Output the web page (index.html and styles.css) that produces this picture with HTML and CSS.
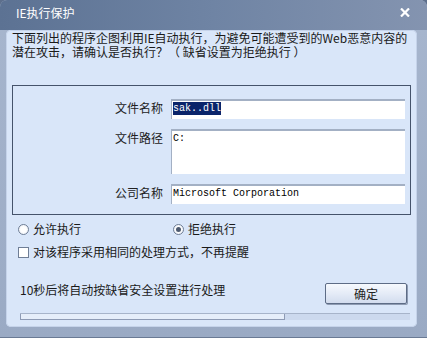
FILE: index.html
```html
<!DOCTYPE html>
<html>
<head>
<meta charset="utf-8">
<link rel="stylesheet" href="styles.css">
</head>
<body>
<div class="window">
  <div class="titlebar">
    <span class="title">IE执行保护</span>
    <svg class="close" width="10" height="9" viewBox="0 0 10 9"><path d="M1 0.5 L9 8.5 M9 0.5 L1 8.5" stroke="#fff" stroke-width="2.2" fill="none"/></svg>
  </div>
  <div class="client">
    <p class="intro">下面列出的程序企图利用IE自动执行，为避免可能遭受到的Web恶意内容的<br>潜在攻击，请确认是否执行？（ 缺省设置为拒绝执行 ）</p>
    <div class="group">
      <div class="field">
        <span class="label">文件名称</span>
        <div class="box"><span class="sel">sak..dll</span></div>
      </div>
      <div class="field">
        <span class="label">文件路径</span>
        <div class="box tall">C:</div>
      </div>
      <div class="field">
        <span class="label">公司名称</span>
        <div class="box">Microsoft Corporation</div>
      </div>
    </div>
    <div class="radios">
      <label class="opt allow"><span class="radio"></span>允许执行</label>
      <label class="opt"><span class="radio on"></span>拒绝执行</label>
    </div>
    <label class="check"><span class="checkbox"></span>对该程序采用相同的处理方式，不再提醒</label>
    <div class="footer">
      <span class="countdown">10秒后将自动按缺省安全设置进行处理</span>
      <button class="ok">确定</button>
    </div>
    <div class="progress"><div class="fill" style="width:68%"></div></div>
  </div>
</div>
</body>
</html>
```
FILE: styles.css
```css
html, body { margin: 0; padding: 0; background: #5d6f8c; }
body { font-family: "Noto Sans CJK SC", "Noto Sans", sans-serif; font-size: 12px; color: #1a1a1a; }
.window {
  width: 427px; height: 338px; box-sizing: border-box;
  background: linear-gradient(#a7b6ce, #9aaac4);
  border-radius: 7px 7px 0 0;
  display: flex; flex-direction: column;
  padding: 0 10px 10px 6px;
  border-bottom: 1px solid #6a7a94;
}
.titlebar {
  height: 30px; margin: 0 -10px 0 -6px; padding: 0 16px;
  background: linear-gradient(90deg, #5c7293 0%, #6f84a4 50%, #8494b0 100%);
  border-radius: 7px 7px 0 0;
  display: flex; align-items: center; justify-content: space-between;
  box-sizing: border-box; padding-bottom: 5px;
}
.title { color: #fff; font-size: 12px; line-height: 14px; }
.close { margin-right: 1px; }
.client {
  flex: 1; background: #d9e6f9; border-radius: 5px;
  display: flex; flex-direction: column;
  padding: 1px 6px 0 6px;
  box-shadow: inset 0 0 0 1px #c5d3ea;
}
.intro { margin: 0; line-height: 14px; letter-spacing: 0; white-space: nowrap; }
.group {
  margin-top: 26px; height: 130px; box-sizing: border-box;
  border: 1px solid #45536b; padding: 13px 5px 0 0;
  display: flex; flex-direction: column; gap: 10px;
}
.field { display: flex; align-items: flex-start; }
.label { width: 150px; text-align: right; padding-right: 8px; line-height: 16px; padding-top: 1px; color: #222; }
.box {
  flex: 1; height: 20px; box-sizing: border-box; background: #fff;
  border-top: 2px solid #a3b0c4; border-left: 1px solid #a3b0c4;
  font-family: "Liberation Mono", monospace; font-size: 10px; line-height: 14px;
  padding: 1px 1px; color: #000;
}
.box.tall { height: 45px; }
.sel { background: #0a246a; color: #fff; padding: 1px 0; }
.radios { display: flex; margin-top: 7px; line-height: 14px; }
.opt { display: flex; align-items: center; gap: 4px; }
.allow { width: 155px; padding-left: 6px; }
.radio {
  width: 11px; height: 11px; border-radius: 50%; box-sizing: border-box;
  border: 1px solid #6f7e96; background: radial-gradient(#fff 40%, #e4e9f2);
  position: relative;
}
.radio.on::after {
  content: ""; position: absolute; left: 2px; top: 2px; width: 5px; height: 5px;
  border-radius: 50%; background: #4d5a70;
}
.check { display: flex; align-items: center; gap: 4px; padding-left: 6px; margin-top: 9px; line-height: 14px; }
.checkbox { width: 11px; height: 11px; box-sizing: border-box; border: 1px solid #6f7e96; background: #fff; }
.footer { display: flex; align-items: flex-start; justify-content: space-between; margin-top: 22px; padding-left: 8px; padding-right: 4px; }
.countdown { line-height: 14px; margin-top: 2px; }
.ok {
  width: 82px; height: 21px; margin-top: 2px;
  font-family: inherit; font-size: 12px; color: #222;
  background: linear-gradient(#f6f9fe, #e3eaf6 55%, #d2dcee);
  border: 1px solid #5d6c86; border-radius: 2px;
  box-shadow: 1px 1px 0 #8e9bb2; padding: 0;
}
.progress {
  margin: 9px 0 0 8px; width: 390px; height: 7px; box-sizing: border-box;
  background: #ccd9ee; border-top: 1px solid #a7b4ca;
}
.fill { height: 100%; box-sizing: border-box; background: #e6eefa; border: 1px solid #8e9bb5; border-top: 0; }
```
